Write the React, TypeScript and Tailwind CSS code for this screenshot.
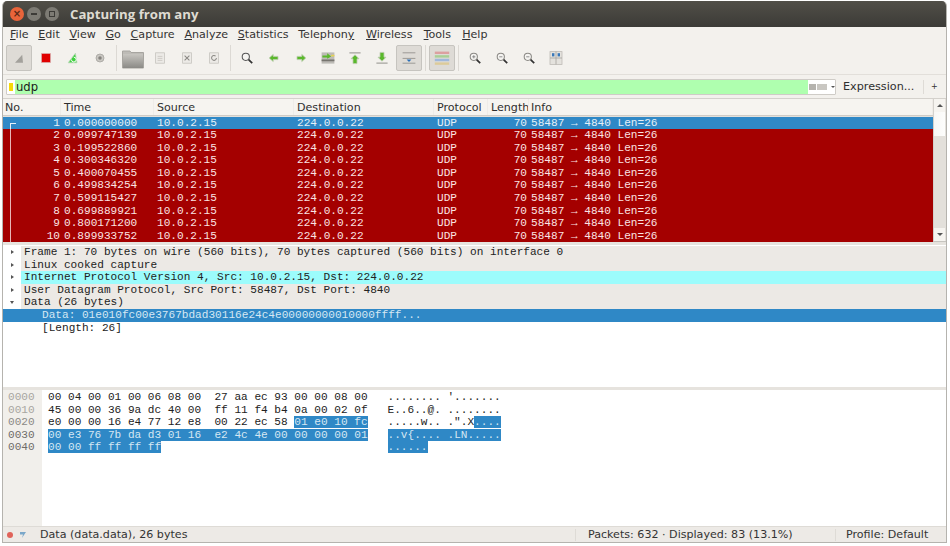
import type { ReactNode } from "react";

const TIMES = [
  "0.000000000",
  "0.099747139",
  "0.199522860",
  "0.300346320",
  "0.400070455",
  "0.499834254",
  "0.599115427",
  "0.699889921",
  "0.800171200",
  "0.899933752",
];

const MENU: [string, string, string, string][] = [
  ["", "F", "ile", ""],
  ["", "E", "dit", ""],
  ["", "V", "iew", ""],
  ["", "G", "o", ""],
  ["", "C", "apture", ""],
  ["", "A", "nalyze", ""],
  ["", "S", "tatistics", ""],
  ["Telephon", "y", "", ""],
  ["", "W", "ireless", "ml-[2px]"],
  ["", "T", "ools", "ml-[1.5px]"],
  ["", "H", "elp", "ml-[1.5px]"],
];

const Svg = ({ children }: { children: ReactNode }) => (
  <svg width="16" height="16" viewBox="0 0 20 20" fill="none">
    {children}
  </svg>
);

const Fin = () => (
  <Svg>
    <path d="M5 16 L14 6 L15 16 Z" fill="#a3a19c" />
  </Svg>
);
const Stop = () => (
  <Svg>
    <rect x="4.5" y="4.5" width="11" height="11" fill="#e00000" stroke="#d9a3a3" />
  </Svg>
);
const Restart = () => (
  <Svg>
    <path d="M4 16 L13 4 L15 16 Z" fill="#3fd13f" stroke="#bcd8bc" />
    <path d="M8 12 a3 3 0 1 0 3 -3" stroke="#ffffff" strokeWidth="1.2" />
  </Svg>
);
const Gear = () => (
  <Svg>
    <circle cx="10" cy="10" r="5" fill="#c9c7c2" stroke="#a5a39e" />
    <circle cx="10" cy="10" r="2.2" fill="#85837f" />
  </Svg>
);
const Folder = () => (
  <svg className="mt-[2px]" width="22" height="20" viewBox="0 0 22 20">
    <defs>
      <linearGradient id="fold" x1="0" y1="0" x2="0" y2="1">
        <stop offset="0" stopColor="#c7c5c0" />
        <stop offset="1" stopColor="#8b8a86" />
      </linearGradient>
    </defs>
    <path d="M0.5 2 H8 L9 3.5 H21.5 V19 H0.5 Z" fill="#bdbbb6" stroke="#a7a5a0" />
    <rect x="1" y="5" width="20" height="14" fill="url(#fold)" />
  </svg>
);
const Doc = ({ children }: { children?: ReactNode }) => (
  <Svg>
    <rect x="4.5" y="3.5" width="11" height="13" fill="#eceae6" stroke="#c6c4bf" />
    {children}
  </Svg>
);
const Lens = ({ mark, dark }: { mark?: "plus" | "minus"; dark?: boolean }) => (
  <Svg>
    <circle cx="8.5" cy="8.5" r="4.5" fill="#f5f4f1" stroke={dark ? "#555" : "#8b8985"} strokeWidth="1.3" />
    <path d="M12 12 L16.5 16.5" stroke="#333" strokeWidth="2.2" />
    {mark && <path d="M6.5 8.5 H10.5" stroke="#777" />}
    {mark === "plus" && <path d="M8.5 6.5 V10.5" stroke="#777" />}
  </Svg>
);
const Arrow = ({ d }: { d: string }) => (
  <Svg>
    <path d={d} fill="#5ab82b" stroke="#bccdb0" />
  </Svg>
);

const ToolButton = ({ children, active }: { children: ReactNode; active?: boolean }) => (
  <div className="w-[27px] h-[26px] flex items-center justify-center">
    <div
      className={
        "w-[26px] h-[26px] flex items-center justify-center rounded-[2px] " +
        (active ? "bg-[#dedbd6] border border-[#c6c4bf]" : "")
      }
    >
      {children}
    </div>
  </div>
);

const Sep = () => (
  <div className="w-[6px] h-[26px] flex justify-center">
    <div className="w-px h-full bg-[#dcd9d4]" />
  </div>
);

const Toolbar = () => (
  <div className="h-[33px] shrink-0 flex items-center pl-[2px] bg-[#f3f1ed] border-b border-[#e2dfda]">
    <ToolButton active>
      <Fin />
    </ToolButton>
    <ToolButton>
      <Stop />
    </ToolButton>
    <ToolButton>
      <Restart />
    </ToolButton>
    <ToolButton>
      <Gear />
    </ToolButton>
    <Sep />
    <ToolButton>
      <Folder />
    </ToolButton>
    <ToolButton>
      <Doc>
        <path d="M7 8 H13 M7 10.5 H13 M7 13 H13" stroke="#c6c4bf" />
      </Doc>
    </ToolButton>
    <ToolButton>
      <Doc>
        <path d="M7 7 L13 13 M13 7 L7 13" stroke="#8b8985" strokeWidth="1.3" />
      </Doc>
    </ToolButton>
    <ToolButton>
      <Doc>
        <path d="M13 10 a3 3 0 1 1 -1 -2.3" stroke="#8b8985" strokeWidth="1.3" />
      </Doc>
    </ToolButton>
    <Sep />
    <ToolButton>
      <Lens dark />
    </ToolButton>
    <ToolButton>
      <Arrow d="M4 10 L9 5.5 V8 H15 V12 H9 V14.5 Z" />
    </ToolButton>
    <ToolButton>
      <Arrow d="M16 10 L11 5.5 V8 H5 V12 H11 V14.5 Z" />
    </ToolButton>
    <ToolButton>
      <Svg>
        <rect x="2" y="3" width="16" height="14" fill="#bdbbb6" />
        <path d="M2 13 H18" stroke="#77756f" strokeWidth="2" />
        <path d="M3 7 H9 V4 L14 8 L9 11 V9.5 H3 Z" fill="#5ab82b" />
        <rect x="14" y="6" width="4" height="2" fill="#e8d44d" />
      </Svg>
    </ToolButton>
    <ToolButton>
      <Svg>
        <path d="M3 3.5 H17" stroke="#a5a39e" strokeWidth="1.5" />
        <path d="M10 6 L15 11 H12.5 V17 H7.5 V11 H5 Z" fill="#5ab82b" stroke="#bccdb0" />
      </Svg>
    </ToolButton>
    <ToolButton>
      <Svg>
        <path d="M3 16.5 H17" stroke="#a5a39e" strokeWidth="1.5" />
        <path d="M10 14 L15 9 H12.5 V3 H7.5 V9 H5 Z" fill="#5ab82b" stroke="#bccdb0" />
      </Svg>
    </ToolButton>
    <ToolButton active>
      <Svg>
        <path d="M2 3.5 H18 M2 10.5 H18 M2 16.5 H18" stroke="#8b8985" />
        <path d="M7 12 H13 L10 15 Z" fill="#2a6fb8" />
      </Svg>
    </ToolButton>
    <Sep />
    <ToolButton active>
      <svg width="16" height="16" viewBox="0 0 20 20">
        <rect x="1" y="2" width="18" height="3" fill="#dca0a0" />
        <rect x="1" y="6.5" width="18" height="3" fill="#a9cf95" />
        <rect x="1" y="11" width="18" height="3" fill="#a0b8dc" />
        <rect x="1" y="15.5" width="18" height="3" fill="#dccb9a" />
      </svg>
    </ToolButton>
    <Sep />
    <ToolButton>
      <Lens mark="plus" />
    </ToolButton>
    <ToolButton>
      <Lens mark="minus" />
    </ToolButton>
    <ToolButton>
      <Lens mark="minus" />
    </ToolButton>
    <ToolButton>
      <Svg>
        <rect x="2.5" y="2" width="15" height="16" fill="#e4e2dd" stroke="#bdbbb6" />
        <path d="M10 2 V18" stroke="#a5a39e" />
        <path d="M2.5 10 H17.5" stroke="#a5a39e" />
        <rect x="5" y="4" width="3" height="4" fill="#3a78b8" />
        <rect x="12" y="4" width="3" height="4" fill="#3a78b8" />
      </Svg>
    </ToolButton>
  </div>
);

const FilterBar = () => (
  <div className="h-[24px] shrink-0 flex items-center pl-[3px] bg-[#f3f1ed] border-b border-[#d4d1cc]">
    <div className="w-[830px] h-[16px] flex items-stretch bg-white border border-[#cfccc7] rounded-[1px]">
      <div className="w-[8px] flex items-center justify-center">
        <div className="w-[4px] h-[8px] bg-[#f5d90a]" />
      </div>
      <div className="w-[793px] bg-[#afffaf] pl-px text-[11.6px] leading-[14px] text-[#1a1a1a]">udp</div>
      <div className="flex-1 flex items-center pl-[1px] gap-[1px]">
        <div className="w-[7px] h-[6px] bg-[#b5b3ae]" />
        <div className="w-[10px] h-[6px] bg-[#c9c7c2]" />
        <div className="ml-[3px] w-0 h-0 border-x-[2px] border-x-transparent border-t-[2px] border-t-[#555]" />
      </div>
    </div>
    <span className="ml-[7px] w-[80px] pt-[2px] text-[11.2px] text-[#2e2e2e]">Expression...</span>
    <div className="w-px h-[14px] bg-[#dedbd6]" />
    <span className="ml-[7px] pt-[1px] text-[8px] text-[#333]">+</span>
  </div>
);

const HEADERS: [string, string][] = [
  ["No.", "w-[58px] pl-[2px]"],
  ["Time", "w-[93px] pl-[3px]"],
  ["Source", "w-[140px] pl-[3px]"],
  ["Destination", "w-[140px] pl-[3px]"],
  ["Protocol", "w-[54px] pl-[3px]"],
  ["Length", "w-[41px] pl-[3px]"],
  ["Info", "flex-1 pl-[2px]"],
];

const PacketList = () => (
  <div className="h-[143px] shrink-0 flex border-b border-[#c6c4bf] bg-[#e3e0db]">
    <div className="w-[930px] flex flex-col">
      <div className="h-[17px] shrink-0 flex items-center bg-[#f6f4f0] border-b border-[#cfccc7] text-[11.1px] text-[#2e2e2e]">
        {HEADERS.map(([label, cls]) => (
          <div key={label} className={cls + " h-full pt-[2px] flex items-center overflow-hidden whitespace-nowrap border-r border-[#efece8]"}>
            {label}
          </div>
        ))}
      </div>
      <div className="flex-1 flex flex-col pt-[0.5px] font-['Liberation_Mono',monospace] text-[11.1px] leading-[12.6px]">
        {TIMES.map((time, i) => (
          <div
            key={time}
            className={
              "h-[12.6px] shrink-0 flex items-center whitespace-pre " +
              (i === 0 ? "bg-[#2f88c6] text-[#e6f1f8]" : "bg-[#a40000] text-[#fbe3e3]")
            }
          >
            <div className="relative w-[58px] h-full text-right pr-[1px]">
              {/* first packet marker */}
              {i === 0 ? (
                <div className="absolute left-[7px] top-[6px] bottom-0 w-[6px] border-l border-t border-[#e6f1f8]" />
              ) : (
                <div className="absolute left-[7px] top-0 bottom-0 w-px bg-[#e7b5b5]" />
              )}
              {i + 1}
            </div>
            <div className="w-[93px] pl-[3px]">{time}</div>
            <div className="w-[140px] pl-[3px]">10.0.2.15</div>
            <div className="w-[140px] pl-[3px]">224.0.0.22</div>
            <div className="w-[54px] pl-[3px]">UDP</div>
            <div className="w-[39px] text-right">70</div>
            <div className="flex-1 pl-[4px]">58487 → 4840 Len=26</div>
          </div>
        ))}
      </div>
    </div>
    <div className="w-[12px] flex flex-col items-center bg-[#e3e0db] border-l border-[#d4d1cc]">
      <div className="w-full h-[13px] bg-[#f6f4f0] flex justify-center pt-[5px]">
        <div className="w-0 h-0 border-x-[3px] border-x-transparent border-b-[3px] border-b-[#555]" />
      </div>
      <div className="w-full h-[24px] bg-gradient-to-r from-[#f8f7f5] to-[#fdfdfc]" />
      <div className="flex-1" />
      <div className="w-full h-[13px] bg-[#f6f4f0] flex justify-center pt-[5px]">
        <div className="w-0 h-0 border-x-[3px] border-x-transparent border-t-[3px] border-t-[#555]" />
      </div>
    </div>
  </div>
);

const TREE: { text: string; bg: string; open?: boolean }[] = [
  { text: "Frame 1: 70 bytes on wire (560 bits), 70 bytes captured (560 bits) on interface 0", bg: "bg-[#ece9e5]" },
  { text: "Linux cooked capture", bg: "bg-[#ece9e5]" },
  { text: "Internet Protocol Version 4, Src: 10.0.2.15, Dst: 224.0.0.22", bg: "bg-[#9cfcfc]" },
  { text: "User Datagram Protocol, Src Port: 58487, Dst Port: 4840", bg: "bg-[#ece9e5]" },
  { text: "Data (26 bytes)", bg: "bg-[#ece9e5]", open: true },
];

const Details = () => (
  <div className="h-[142px] shrink-0 mt-[3px] pt-[1px] bg-white font-['Liberation_Mono',monospace] text-[11.1px] leading-[12.6px] text-[#222] whitespace-pre">
    {TREE.map((row) => (
      <div key={row.text} className="h-[12.6px] flex">
        <div className="w-[18px] flex items-center justify-center">
          {row.open ? (
            <div className="w-0 h-0 border-x-[2.5px] border-x-transparent border-t-[3px] border-t-[#555]" />
          ) : (
            <div className="w-0 h-0 border-y-[2.5px] border-y-transparent border-l-[3px] border-l-[#555]" />
          )}
        </div>
        <div className={"flex-1 pl-[3px] " + row.bg}>{row.text}</div>
      </div>
    ))}
    <div className="h-[12.6px] pl-[39px] bg-[#2f88c6] text-[#d5e7f3]">Data: 01e010fc00e3767bdad30116e24c4e00000000010000ffff...</div>
    <div className="h-[12.6px] pl-[39px]">[Length: 26]</div>
  </div>
);

const Sel = ({ children }: { children: ReactNode }) => (
  <span className="bg-[#2f88c6] text-[#d5e7f3]">{children}</span>
);

const HEX: { off: string; tone: string; line: ReactNode }[] = [
  { off: "0000", tone: "text-[#a8a6a1]", line: "00 04 00 01 00 06 08 00  27 aa ec 93 00 00 08 00   ........ '......." },
  { off: "0010", tone: "text-[#a8a6a1]", line: "45 00 00 36 9a dc 40 00  ff 11 f4 b4 0a 00 02 0f   E..6..@. ........" },
  {
    off: "0020",
    tone: "text-[#8b8985]",
    line: (
      <>
        e0 00 00 16 e4 77 12 e8  00 22 ec 58 <Sel>01 e0 10 fc</Sel>   .....w.. .".X<Sel>....</Sel>
      </>
    ),
  },
  {
    off: "0030",
    tone: "text-[#6f6d69]",
    line: (
      <>
        <Sel>00 e3 76 7b da d3 01 16  e2 4c 4e 00 00 00 00 01</Sel>   <Sel>..v{"{"}.... .LN.....</Sel>
      </>
    ),
  },
  {
    off: "0040",
    tone: "text-[#6f6d69]",
    line: (
      <>
        <Sel>00 00 ff ff ff ff</Sel>
        {"                                  "}
        <Sel>......</Sel>
      </>
    ),
  },
];

const HexDump = () => (
  <div className="flex-1 min-h-0 mt-[3px] flex bg-white font-['Liberation_Mono',monospace] text-[11.1px] leading-[12.6px] whitespace-pre">
    <div className="w-[39px] pt-[1px] pl-[5px] bg-[#f1efeb]">
      {HEX.map((row) => (
        <div key={row.off} className={"h-[12.6px] " + row.tone}>
          {row.off}
        </div>
      ))}
    </div>
    <div className="flex-1 pt-[1px] pl-[6px] text-[#222]">
      {HEX.map((row) => (
        <div key={row.off} className="h-[12.6px]">
          {row.line}
        </div>
      ))}
    </div>
  </div>
);

const StatusBar = () => (
  <div className="h-[16px] shrink-0 flex items-center bg-[#edeae6] border-t border-[#dedbd6] text-[11.1px] text-[#333] whitespace-nowrap">
    <div className="ml-[4px] w-[6px] h-[6px] rounded-full bg-[#e0635a]" />
    <svg className="ml-[6px]" width="8" height="8" viewBox="0 0 8 8">
      <path d="M1 1 H7 L5 4 L3 7 L4 3.5 H1 Z" fill="#7ba7c9" />
    </svg>
    <span className="ml-[13px] w-[535px] pt-[2px]">Data (data.data), 26 bytes</span>
    <div className="w-px h-[12px] bg-[#dedbd6]" />
    <span className="ml-[12px] w-[247px] pt-[2px]">Packets: 632 · Displayed: 83 (13.1%)</span>
    <div className="w-px h-[12px] bg-[#dedbd6]" />
    <span className="ml-[10px] pt-[2px]">Profile: Default</span>
  </div>
);

export default function App() {
  return (
    <div className="w-[950px] h-[546px] bg-white pl-[2px] pr-[3px] pt-px pb-[3px] overflow-hidden font-['DejaVu_Sans',sans-serif]">
      <div className="h-full flex flex-col bg-[#e6e3de] border-x border-b border-[#b5b3ae] rounded-t-[5px] overflow-hidden">
        <div className="h-[26px] shrink-0 flex items-center bg-gradient-to-b from-[#514f48] to-[#3c3b37]">
          <div className="ml-[7px] w-[14px] h-[14px] rounded-full bg-[#e9643a] flex items-center justify-center text-[10px] leading-none font-bold text-[#5a2a18]">
            ×
          </div>
          <div className="ml-[3px] w-[14px] h-[14px] rounded-full bg-[#7d7b74] flex items-center justify-center">
            <div className="w-[6px] h-[2px] bg-[#3c3b37]" />
          </div>
          <div className="ml-[4px] w-[14px] h-[14px] rounded-full bg-[#7d7b74] flex items-center justify-center">
            <div className="w-[6px] h-[6px] border border-[#3c3b37]" />
          </div>
          <span className="ml-[11px] pt-[1px] font-['Open_Sans',sans-serif] font-bold text-[13.2px] text-[#dfdbd2]">
            Capturing from any
          </span>
        </div>
        <div className="h-[15px] shrink-0 flex items-center pt-[2px] gap-[9.7px] pl-[7px] bg-[#f3f1ed] text-[11.1px] text-[#333]">
          {MENU.map(([pre, letter, post, extra]) => (
            <span key={pre + letter + post} className={extra}>
              {pre}
              <u>{letter}</u>
              {post}
            </span>
          ))}
        </div>
        <Toolbar />
        <FilterBar />
        <PacketList />
        <Details />
        <HexDump />
        <StatusBar />
      </div>
    </div>
  );
}
